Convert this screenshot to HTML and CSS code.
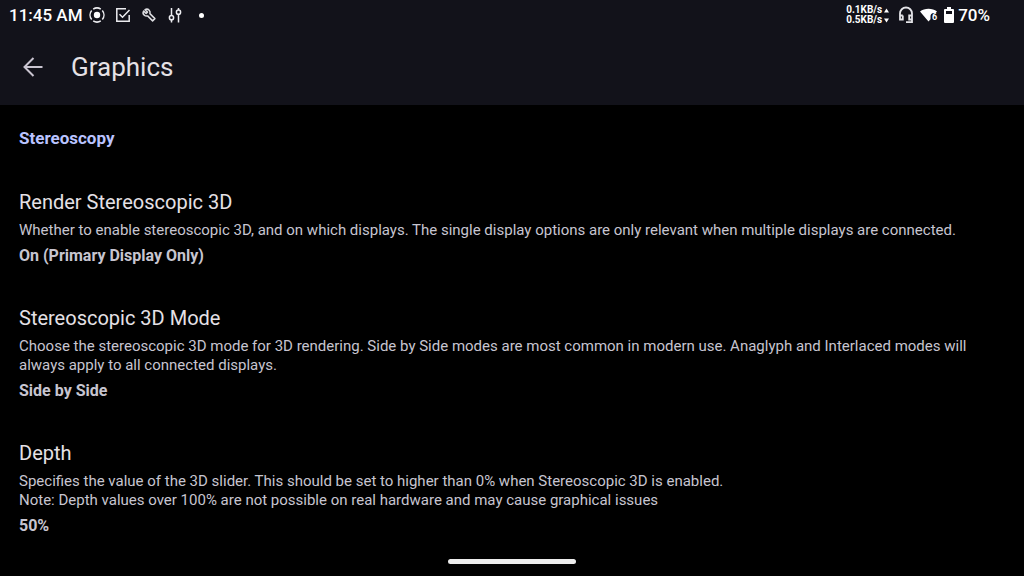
FILE: index.html
```html
<!DOCTYPE html>
<html lang="en">
<head>
  <meta charset="UTF-8">
  <meta name="viewport" content="width=device-width, initial-scale=1.0">
  <title>Graphics</title>
  <link rel="stylesheet" href="styles.css">
</head>
<body>
  <header class="top">
    <!-- System status bar -->
    <div class="status">
      <div class="status-left">
        <span class="clock">11:45 AM</span>
        <svg width="16" height="16" viewBox="0 0 16 16" fill="none" stroke="#ececf0" stroke-width="1.5">
          <circle cx="8" cy="8" r="3.2" fill="#fff" stroke="none"/>
          <path d="M4.200 2.100A7 7 0 0 1 11.800 2.100M13.300 3.500A7 7 0 0 1 13.300 12.500M11.800 13.900A7 7 0 0 1 4.200 13.900M2.700 12.500A7 7 0 0 1 2.700 3.500"/>
        </svg>
        <svg width="16" height="16" viewBox="0 0 16 16" fill="none" stroke="#ececf0" stroke-width="1.5">
          <path d="M11 1.800H1.800V14.200H14.200V8M4.500 7.200L7.500 10.200L14.500 3"/>
        </svg>
        <svg width="16" height="16" viewBox="0 0 16 16" fill="none" stroke="#dedee2" stroke-width="1.500" stroke-linejoin="round">
          <path d="M4 2.600L6.500 5.100L5.100 6.500L2.600 4C1.700 5.600 2.200 7.300 3.300 8.200C4.300 9.100 5.500 9.300 6.600 8.900L11.600 13.900L13.900 11.600L8.900 6.600C9.300 5.500 9.100 4.200 8.200 3.300C7.200 2.200 5.600 1.800 4 2.600z"/>
        </svg>
        <svg width="16" height="16" viewBox="0 0 16 16" fill="none" stroke="#ececf0" stroke-width="1.500">
          <path d="M4.500 1V8.500M4.500 13V15.500M11.500 8V15.500M11.500 1V3"/>
          <circle cx="4.500" cy="10.700" r="2.100"/>
          <circle cx="11.500" cy="5.200" r="2.100"/>
        </svg>
        <span class="dot"></span>
      </div>
      <div class="status-right">
        <div class="speed">
          <span>0.1KB/s <svg width="5" height="5" viewBox="0 0 5 5" fill="#fff"><path d="M2.500 0.500L5 4.500H0z"/></svg></span>
          <span>0.5KB/s <svg width="5" height="5" viewBox="0 0 5 5" fill="#fff"><path d="M0 .5H5L2.500 4.500z"/></svg></span>
        </div>
        <svg width="16" height="18" viewBox="0 0 16 18" fill="none" stroke="#e4e4e8" stroke-width="1.800">
          <path d="M4.800 9.500H2V7.500A6 6 0 0 1 14 7.500V16.200H8M2 9V13.500H4.800V9.500M14 9.500H11.200V13.500H14"/>
        </svg>
        <svg width="18" height="16" viewBox="0 0 18 16" fill="#fff">
          <path d="M0 4.500C4.500 .8 12.500 .8 17 4.500L15.500 6.200C12 5.500 10.500 7 10.500 9.500V12.200L8.500 14.500z"/>
          <text class="wifi-gen" x="12" y="13">6</text>
        </svg>
        <svg width="10" height="16" viewBox="0 0 10 16">
          <path fill="#fff" fill-rule="evenodd" d="M3 0H7V2H9Q10 2 10 3V15Q10 16 9 16H1Q0 16 0 15V3Q0 2 1 2H3zM2 4V7H8V4z"/>
        </svg>
        <span class="battery">70%</span>
      </div>
    </div>

    <div class="toolbar">
      <button class="back" type="button" aria-label="Back">
        <svg width="20" height="20" viewBox="0 0 20 20" fill="none" stroke="#c9c4d0" stroke-width="2">
          <path d="M19.500 10H2M10.500 1L1.500 10L10.500 19"/>
        </svg>
      </button>
      <h1>Graphics</h1>
    </div>
  </header>

  <main class="settings">
    <h2>Stereoscopy</h2>

    <section class="setting">
      <h3>Render Stereoscopic 3D</h3>
      <p>Whether to enable stereoscopic 3D, and on which displays. The single display options are only relevant when multiple displays are connected.</p>
      <strong>On (Primary Display Only)</strong>
    </section>

    <section class="setting">
      <h3>Stereoscopic 3D Mode</h3>
      <p>Choose the stereoscopic 3D mode for 3D rendering. Side by Side modes are most common in modern use. Anaglyph and Interlaced modes will always apply to all connected displays.</p>
      <strong>Side by Side</strong>
    </section>

    <section class="setting">
      <h3>Depth</h3>
      <p>Specifies the value of the 3D slider. This should be set to higher than 0% when Stereoscopic 3D is enabled.<br>
      Note: Depth values over 100% are not possible on real hardware and may cause graphical issues</p>
      <strong>50%</strong>
    </section>
  </main>

  <div class="home-bar"></div>
</body>
</html>
```

FILE: styles.css
```css
* {
  box-sizing: border-box;
}

body {
  margin: 0;
  min-height: 100vh;
  background: #000;
  color: #e5e1e6;
  font-family: Roboto, "Liberation Sans", sans-serif;
}

h1, h2, h3, p {
  margin: 0;
}

svg {
  display: block;
}

.top {
  background: #12121a;
}

.status {
  display: flex;
  justify-content: space-between;
  height: 30px;
  padding: 0 34px 0 9px;
  color: #fff;
  font-size: 17px;
  font-weight: 500;
}

.status-left, .status-right {
  display: flex;
  align-items: center;
}

.status-left {
  gap: 10px;
}

.clock {
  margin-right: -4px;
}

.dot {
  width: 5px;
  height: 5px;
  margin-left: 6px;
  border-radius: 50%;
  background: #fff;
}

.status-right {
  gap: 6px;
}

.speed {
  margin-right: 3px;
  font-size: 10px;
  font-weight: 700;
  line-height: 10px;
}

.speed span {
  display: flex;
  align-items: center;
  gap: 2px;
}

.wifi-gen {
  font-size: 9px;
  font-weight: 700;
}

.battery {
  margin-left: -2px;
}

.toolbar {
  display: flex;
  align-items: center;
  gap: 28px;
  height: 75px;
  padding: 0 23px 2px;
}

.back {
  padding: 0;
  border: none;
  background: none;
  cursor: pointer;
}

h1 {
  font-size: 26px;
  font-weight: 400;
  line-height: 32px;
}

.settings {
  padding: 21px 19px 0;
}

h2 {
  margin-bottom: 37px;
  color: #bac3ff;
  font-size: 17px;
  font-weight: 700;
  line-height: 24px;
}

.setting {
  margin-bottom: 38px;
}

h3 {
  font-size: 20px;
  font-weight: 400;
  line-height: 30px;
}

.setting p {
  margin: 4px 0 6px;
  color: #c7c5d0;
  font-size: 15px;
  line-height: 19px;
}

.setting strong {
  display: block;
  color: #c7c5d0;
  font-size: 16px;
  line-height: 19px;
}

/* Gesture navigation handle */
.home-bar {
  position: fixed;
  bottom: 12px;
  left: 50%;
  width: 128px;
  height: 5px;
  margin-left: -64px;
  border-radius: 3px;
  background: #ececec;
}
```
